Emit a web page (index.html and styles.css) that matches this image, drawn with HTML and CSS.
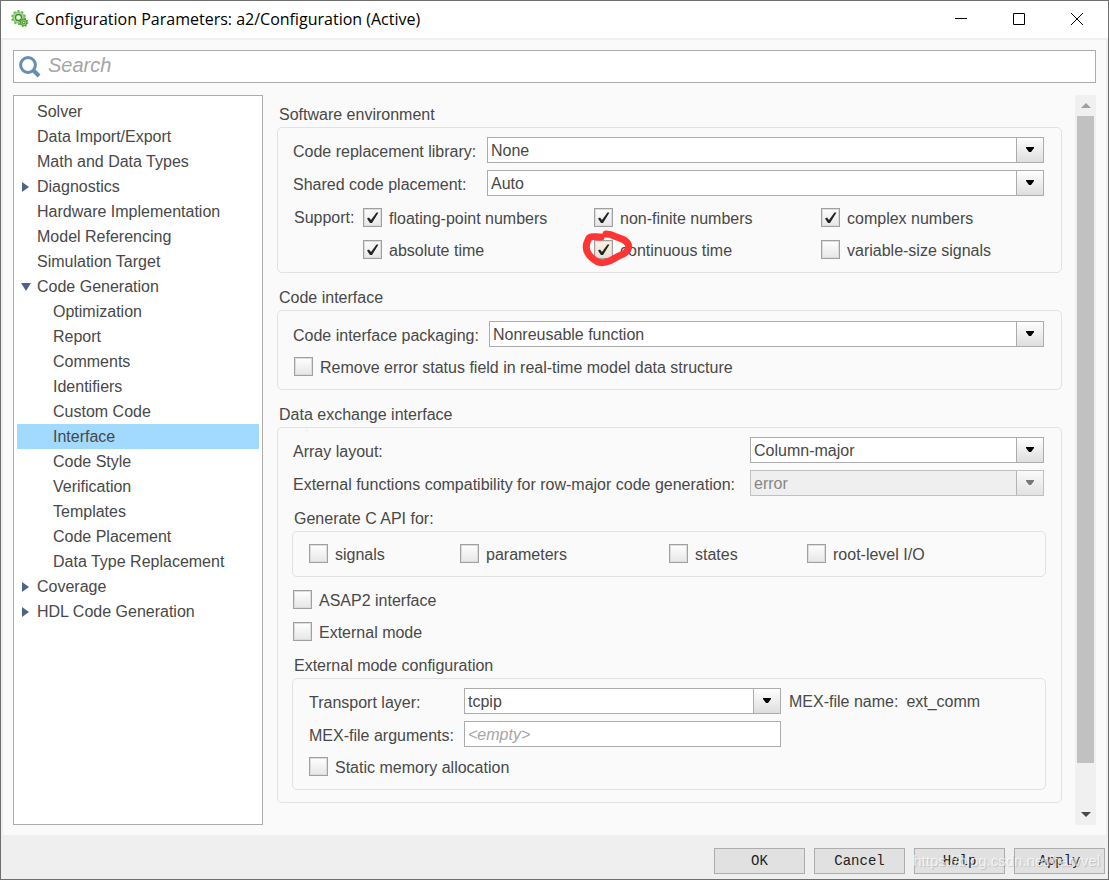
FILE: index.html
```html
<!DOCTYPE html>
<html lang="en">
<head>
<meta charset="utf-8">
<title>Configuration Parameters: a2/Configuration (Active)</title>
<link rel="stylesheet" href="styles.css">
</head>
<body>
<div class="window">
  <header class="titlebar">
    <svg class="app-icon" viewBox="0 0 18 18" aria-hidden="true">
      <circle cx="7.500" cy="7.500" r="5.600" fill="#a9dd8a" stroke="#6fb858" stroke-width="1"/>
      <circle cx="7.500" cy="7.500" r="6.500" fill="none" stroke="#6fb858" stroke-width="1.800" stroke-dasharray="2.200 1.900"/>
      <circle cx="7.500" cy="7.500" r="3" fill="#f2fbea" stroke="#3f8a3a" stroke-width="1.300"/>
      <circle cx="12.700" cy="12.500" r="3.900" fill="none" stroke="#5fae48" stroke-width="1.600" stroke-dasharray="1.600 1.460"/>
      <circle cx="12.700" cy="12.500" r="3.200" fill="#9bdc72" stroke="#3f9232" stroke-width="1"/>
      <circle cx="12.700" cy="12.500" r="1.300" fill="#fff" stroke="#2f7d2c" stroke-width="1"/>
    </svg>
    <h1 class="title">Configuration Parameters: a2/Configuration (Active)</h1>
    <div class="window-controls">
      <button class="window-button" aria-label="Minimize"><svg viewBox="0 0 14 14"><path d="M1 6.500H13"/></svg></button>
      <button class="window-button" aria-label="Maximize"><svg viewBox="0 0 14 14"><path d="M1.500 1.500H12.500V12.500H1.500Z"/></svg></button>
      <button class="window-button" aria-label="Close"><svg viewBox="0 0 14 14"><path d="M1 1L13 13M13 1L1 13"/></svg></button>
    </div>
  </header>

  <main class="main">
    <div class="search">
      <svg class="search-icon" viewBox="0 0 22 22" aria-hidden="true"><circle cx="9" cy="9" r="7.400"/><path d="M14.500 14.500L20 20" stroke-width="4"/></svg>
      <input class="search-input" type="text" placeholder="Search" aria-label="Search">
    </div>

    <div class="columns">
      <nav class="tree" aria-label="Configuration pages">
        <ul class="tree-list">
          <li><a class="node" href="#">Solver</a></li>
          <li><a class="node" href="#">Data Import/Export</a></li>
          <li><a class="node" href="#">Math and Data Types</a></li>
          <li><a class="node closed" href="#">Diagnostics</a></li>
          <li><a class="node" href="#">Hardware Implementation</a></li>
          <li><a class="node" href="#">Model Referencing</a></li>
          <li><a class="node" href="#">Simulation Target</a></li>
          <li><a class="node open" href="#">Code Generation</a>
            <ul class="tree-list">
              <li><a class="node child" href="#">Optimization</a></li>
              <li><a class="node child" href="#">Report</a></li>
              <li><a class="node child" href="#">Comments</a></li>
              <li><a class="node child" href="#">Identifiers</a></li>
              <li><a class="node child" href="#">Custom Code</a></li>
              <li><a class="node child selected" href="#">Interface</a></li>
              <li><a class="node child" href="#">Code Style</a></li>
              <li><a class="node child" href="#">Verification</a></li>
              <li><a class="node child" href="#">Templates</a></li>
              <li><a class="node child" href="#">Code Placement</a></li>
              <li><a class="node child" href="#">Data Type Replacement</a></li>
            </ul>
          </li>
          <li><a class="node closed" href="#">Coverage</a></li>
          <li><a class="node closed" href="#">HDL Code Generation</a></li>
        </ul>
      </nav>

      <div class="content">
        <section class="section">
          <h2 class="heading">Software environment</h2>
          <div class="panel">
            <div class="fields fields-env">
              <label for="library">Code replacement library:</label>
              <select class="select" id="library"><option>None</option></select>
              <label for="placement">Shared code placement:</label>
              <select class="select" id="placement"><option>Auto</option></select>
            </div>
            <div class="support">
              <span>Support:</span>
              <div class="support-grid">
                <label class="check"><input type="checkbox" checked>floating-point numbers</label>
                <label class="check"><input type="checkbox" checked>non-finite numbers</label>
                <label class="check"><input type="checkbox" checked>complex numbers</label>
                <label class="check"><input type="checkbox" checked>absolute time</label>
                <label class="check marked"><input type="checkbox" checked>continuous time
                  <svg class="scribble" viewBox="0 0 56 42" aria-hidden="true"><path d="M21 9C14 9 10 7 8 12C5 18 6 24 11 29C16 34 20 36 26 34C32 33 35 29 41 27C47 25 50 20 48 16C46 12 40 10 34 8C31 6 28 6 26 6"/></svg>
                </label>
                <label class="check"><input type="checkbox">variable-size signals</label>
              </div>
            </div>
          </div>
        </section>

        <section class="section">
          <h2 class="heading">Code interface</h2>
          <div class="panel">
            <div class="fields fields-code">
              <label for="packaging">Code interface packaging:</label>
              <select class="select" id="packaging"><option>Nonreusable function</option></select>
            </div>
            <div class="checks"><label class="check"><input type="checkbox">Remove error status field in real-time model data structure</label></div>
          </div>
        </section>

        <section class="section">
          <h2 class="heading">Data exchange interface</h2>
          <div class="panel">
            <div class="fields fields-data">
              <label for="layout">Array layout:</label>
              <select class="select" id="layout"><option>Column-major</option></select>
              <label for="compat">External functions compatibility for row-major code generation:</label>
              <select class="select" id="compat" disabled><option>error</option></select>
            </div>
            <h3 class="heading subheading api-heading">Generate C API for:</h3>
            <div class="panel subpanel api">
              <label class="check"><input type="checkbox">signals</label>
              <label class="check"><input type="checkbox">parameters</label>
              <label class="check"><input type="checkbox">states</label>
              <label class="check"><input type="checkbox">root-level I/O</label>
            </div>
            <div class="checks modes">
              <label class="check"><input type="checkbox">ASAP2 interface</label>
              <label class="check"><input type="checkbox">External mode</label>
            </div>
            <h3 class="heading subheading">External mode configuration</h3>
            <div class="panel subpanel">
              <div class="fields fields-external">
                <label for="transport">Transport layer:</label>
                <select class="select" id="transport"><option>tcpip</option></select>
                <div class="mex-name"><span>MEX-file name:</span><span>ext_comm</span></div>
                <label for="mexargs">MEX-file arguments:</label>
                <input class="textbox" id="mexargs" type="text" placeholder="&lt;empty&gt;">
              </div>
              <div class="checks static"><label class="check"><input type="checkbox">Static memory allocation</label></div>
            </div>
          </div>
        </section>
      </div>

      <div class="scrollbar" aria-hidden="true">
        <span class="arrow up"></span>
        <span class="track"><span class="thumb"></span></span>
        <span class="arrow down"></span>
      </div>
    </div>
  </main>

  <footer class="footer">
    <button class="button">OK</button>
    <button class="button">Cancel</button>
    <button class="button">Help</button>
    <button class="button">Apply</button>
    <span class="watermark">https://blog.csdn.net/harvvel</span>
  </footer>
</div>
</body>
</html>
```

FILE: styles.css
```css
* { box-sizing: border-box; }

body {
  margin: 0;
  font: 16px/20px "Liberation Sans", Arial, sans-serif;
  color: #484848;
}

button, input, select { font: inherit; color: inherit; margin: 0; }

.window {
  display: flex;
  flex-direction: column;
  min-height: 100vh;
  border: 1px solid #6e6e6e;
  background: #efefef;
}

/* Title bar */
.titlebar {
  display: flex;
  align-items: center;
  height: 37px;
  padding: 0 2px 1px 10px;
  background: #fff;
  color: #000;
}
.app-icon { width: 18px; height: 18px; }
.title {
  flex: 1;
  margin: 0 0 0 6px;
  font: 16px/20px "Open Sans", "Noto Sans", sans-serif;
}
.window-controls { display: flex; }
.window-button {
  width: 58px;
  height: 36px;
  padding: 0;
  border: 0;
  background: none;
}
.window-button svg {
  display: block;
  width: 14px;
  height: 14px;
  margin: auto;
  fill: none;
  stroke: #000;
}

/* Search and columns */
.main {
  flex: 1;
  display: flex;
  flex-direction: column;
  gap: 12px;
  padding: 10px;
  border: 2px solid #efefef;
  background: #fafafa;
}
.search {
  display: flex;
  align-items: center;
  height: 33px;
  padding-left: 5px;
  border: 1px solid #acacac;
  background: #fff;
}
.search-icon {
  width: 22px;
  height: 22px;
  fill: none;
  stroke: #668db5;
  stroke-width: 3;
}
.search-input {
  flex: 1;
  height: 29px;
  padding: 0 0 2px 7px;
  border: 0;
  background: none;
  font-size: 20px;
}
::placeholder { color: #a6a6a6; font-style: italic; opacity: 1; }
.columns { flex: 1; display: flex; }

/* Page tree */
.tree {
  width: 250px;
  padding: 3px;
  border: 1px solid #acacac;
  background: #fff;
}
.tree-list { margin: 0; padding: 0; list-style: none; }
.node {
  display: flex;
  align-items: center;
  height: 25px;
  padding-left: 20px;
  color: inherit;
  text-decoration: none;
}
.child { padding-left: 36px; }
.selected { background: #a2daff; }
.closed { padding-left: 5px; }
.open { padding-left: 4px; }
.closed::before {
  content: "";
  margin-right: 8px;
  border: solid transparent;
  border-width: 5px 0 5px 7px;
  border-left-color: #49658a;
}
.open::before {
  content: "";
  margin-right: 6px;
  border: solid transparent;
  border-width: 8px 5px 0;
  border-top-color: #49658a;
}

/* Sections */
.content {
  flex: 1;
  display: flex;
  flex-direction: column;
  gap: 11px;
  padding: 6px 13px 22px 14px;
}
.heading {
  margin: 0;
  padding: 2px 0 0 2px;
  font-size: 16px;
  font-weight: 400;
  line-height: 24px;
}
.panel {
  padding: 9px 15px 12px 14px;
  border: 1px solid #e2e2e2;
  border-radius: 5px;
}
.fields {
  display: grid;
  row-gap: 7px;
  align-items: center;
  padding: 0 2px 0 1px;
}
.fields > label { padding-top: 4px; }
.fields-env { grid-template-columns: 194px 1fr; }
.fields-code { grid-template-columns: 196px 1fr; padding-top: 1px; }
.fields-data { grid-template-columns: 457px 1fr; }
.fields-external { grid-template-columns: 155px 317px 1fr; padding: 0; }

.select, .textbox {
  width: 100%;
  height: 26px;
  border: 1px solid #acacac;
  border-radius: 0;
  background-color: #fff;
}
.select {
  appearance: none;
  padding: 2px 28px 0 3px;
  background-image:
    url("data:image/svg+xml,%3Csvg xmlns='http://www.w3.org/2000/svg' width='8' height='6'%3E%3Cpath d='M0 0H8V1L5 5H3L0 1Z'/%3E%3C/svg%3E"),
    linear-gradient(#acacac, #acacac),
    linear-gradient(#fefefe, #dedede);
  background-repeat: no-repeat;
  background-position: right 9px center, right 26px top, right top;
  background-size: 8px 6px, 1px 100%, 26px 100%;
}
.select:disabled {
  border-color: #c0c0c0;
  background-color: #efefef;
  background-image:
    url("data:image/svg+xml,%3Csvg xmlns='http://www.w3.org/2000/svg' width='8' height='6'%3E%3Cpath fill='%23777' d='M0 0H8V1L5 5H3L0 1Z'/%3E%3C/svg%3E"),
    linear-gradient(#b4b4b4, #b4b4b4),
    linear-gradient(#fafafa, #e2e2e2);
  color: #868686;
  opacity: 1;
}
.textbox { padding: 2px 3px 0; }
.mex-name { display: flex; gap: 8px; padding: 2px 0 0 8px; }

/* Check boxes */
.check {
  display: flex;
  align-items: flex-start;
  gap: 7px;
  height: 20px;
  line-height: 22px;
  white-space: nowrap;
}
.check input {
  appearance: none;
  flex: none;
  width: 19px;
  height: 19px;
  border: 1px solid #a0a0a0;
  background: linear-gradient(#fff, #e6e6e6);
  box-shadow: inset 0 0 0 1px #dcdcdc;
}
.check input:checked {
  background:
    url("data:image/svg+xml,%3Csvg xmlns='http://www.w3.org/2000/svg' width='17' height='17'%3E%3Cpath fill='%23222' d='M3 9.500L5 8.500L7 11L12.500 3.500L14.500 3.500L8 14H6Z'/%3E%3C/svg%3E") center no-repeat,
    linear-gradient(#fff, #e6e6e6);
}
.support { display: flex; padding: 12px 0 0 2px; }
.support > span { width: 69px; }
.support-grid {
  flex: 1;
  display: grid;
  grid-template-columns: 231px 227px 1fr;
  row-gap: 12px;
}
.checks {
  display: flex;
  flex-direction: column;
  gap: 12px;
  padding: 10px 0 0 2px;
}

/* Hand-drawn ring */
.marked { position: relative; }
.marked input:checked {
  background:
    url("data:image/svg+xml,%3Csvg xmlns='http://www.w3.org/2000/svg' width='17' height='17'%3E%3Cpath fill='%23222' d='M3 9.500L5 8.500L7 11L12.500 3.500L14.500 3.500L8 14H6Z'/%3E%3C/svg%3E") center no-repeat,
    linear-gradient(#fff3e6, #eadfd2);
}
.scribble {
  position: absolute;
  left: -14px;
  top: -12px;
  width: 56px;
  height: 42px;
  fill: none;
  stroke: #ff3434;
  stroke-width: 7;
  stroke-linecap: round;
  stroke-linejoin: round;
}

/* Nested groups */
.api-heading { margin-top: 9px; }
.subpanel { padding: 9px 16px 12px; }
.api {
  display: grid;
  grid-template-columns: 151px 209px 138px 1fr;
  padding: 12px 16px;
}
.modes { padding: 13px 0 10px 1px; }
.static { padding-left: 0; }

/* Scroll bar */
.scrollbar {
  display: flex;
  flex-direction: column;
  width: 21px;
  background: #f0f0f0;
}
.track { flex: 1; display: flex; padding: 0 2px; }
.thumb { flex: 1; height: 94%; background: #c1c1c1; }
.arrow { display: grid; place-items: center; height: 21px; }
.arrow::before { content: ""; border: solid transparent; }
.up::before { border-width: 0 5px 5px; border-bottom-color: #a0a0a0; }
.down::before { border-width: 5px 5px 0; border-top-color: #484848; }

/* Footer */
.footer {
  position: relative;
  display: flex;
  justify-content: flex-end;
  gap: 9px;
  padding: 11px 3px 5px;
}
.button {
  width: 91px;
  height: 26px;
  padding: 0;
  border: 1px solid #adadad;
  background: #e1e1e1;
  color: #222;
  font: 14px/20px "Liberation Mono", monospace;
}
.watermark {
  position: absolute;
  right: 8px;
  bottom: 8px;
  color: rgba(255, 255, 255, 0.7);
  font-size: 15px;
  text-shadow: 1px 1px 1px rgba(0, 0, 0, 0.15);
  pointer-events: none;
}
```
